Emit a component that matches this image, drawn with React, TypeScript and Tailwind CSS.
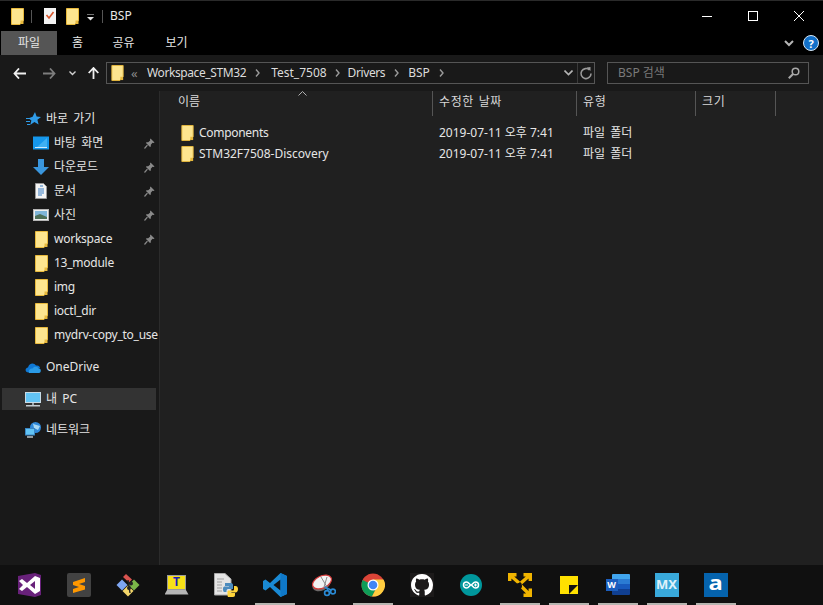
import React from 'react';

const FONT = "font-['Noto_Sans','Noto_Sans_CJK_KR',sans-serif]";

function Folder({ className = 'w-[13px] h-[17px]' }: { className?: string }) {
  return (
    <svg className={className} viewBox="0 0 13 17">
      <path d="M0.5 0.5H12.5V12.5L9 16.5H0.5Z" fill="#fde58f" stroke="#e8b93c" />
      <path d="M9.5 16V12.5H12.5V16Z" fill="#e8b93c" />
    </svg>
  );
}

function Pin() {
  return (
    <svg className="w-[11px] h-[11px]" viewBox="0 0 11 11">
      <path d="M6.5 0.5L10.5 4.5L9.5 5L8.5 4.8L6.8 6.8L6.8 8.6L6 9L2 5L2.4 4.2L4.2 4.2L6.2 2.5L6 1.5Z" fill="#8a8a8a" />
      <path d="M3.4 7.2L0.5 10.5" stroke="#8a8a8a" strokeWidth="1.2" />
    </svg>
  );
}

function DesktopIcon() {
  return (
    <svg className="w-4 h-3.5" viewBox="0 0 16 14">
      <rect width="16" height="13" y="0.5" fill="#1597ec" />
      <path d="M2 11.5H14" stroke="#cdeafc" />
      <path d="M4 11L14 2V11Z" fill="#3fb0f3" />
    </svg>
  );
}

function DownloadIcon() {
  return (
    <svg className="w-4 h-4" viewBox="0 0 16 16">
      <path d="M5 0H11V8H16L8 16L0 8H5Z" fill="#3a96dd" />
    </svg>
  );
}

function DocumentIcon() {
  return (
    <svg className="w-3 h-4" viewBox="0 0 12 16">
      <path d="M0.5 0.5H8.5L11.5 3.5V15.5H0.5Z" fill="#f4f4f4" stroke="#9a9a9a" />
      <path d="M5 3H8M3 6H9M3 8H9M3 10H9M3 12H7" stroke="#3b7fc4" />
    </svg>
  );
}

function PictureIcon() {
  return (
    <svg className="w-4 h-3.5" viewBox="0 0 16 14">
      <rect x="0.5" y="1.5" width="15" height="11" fill="#eeeeee" stroke="#b5b5b5" />
      <rect x="2" y="3" width="12" height="8" fill="#7fb5d8" />
      <path d="M2 8L7 6L14 9V11H2Z" fill="#4d6f57" />
    </svg>
  );
}

function QuickStar() {
  return (
    <svg className="w-[15px] h-[14px]" viewBox="0 0 15 14">
      <path d="M9 0L10.6 4.6L15 5L11.4 7.8L12.6 12.5L8.4 10L4.2 13L5.4 8.5L2.6 6.2L6.6 4.8Z" fill="#2f9ce8" />
      <path d="M0 6.5H4M0 9.5H4M1 12.5H4" stroke="#2f9ce8" />
    </svg>
  );
}

function OneDriveIcon() {
  return (
    <svg className="w-4 h-[11px]" viewBox="0 0 16 11">
      <path d="M3.5 10.5C0 10.5 -0.5 6 3 5.5C4 1 9 0 11 3.5C14 3 15 5 15 6L8 7Z" fill="#0f78d4" />
      <path d="M4 11H14C16.5 10.5 16.5 6.5 13.5 6.2C11.5 4 8.5 4.6 7.6 6.6C5 6 3 8.5 4 11Z" fill="#2a9ae6" />
    </svg>
  );
}

function PcIcon() {
  return (
    <svg className="w-4 h-[15px]" viewBox="0 0 16 15">
      <rect x="0.5" y="0.5" width="15" height="10" fill="#62c4f5" stroke="#c8dbe6" />
      <path d="M7 11H9V13H7Z" fill="#9aa5ac" />
      <path d="M1 13H15V14.5H1Z" fill="#c4ccd1" />
    </svg>
  );
}

function NetworkIcon() {
  return (
    <svg className="w-4 h-4" viewBox="0 0 16 16">
      <circle cx="10.5" cy="5.5" r="5.5" fill="#2f89d9" />
      <path d="M8 1.5C10 3 13 3 15 4L13 8L9 6Z" fill="#a8d9f4" />
      <rect x="0.5" y="6.5" width="9" height="6.5" fill="#62c4f5" stroke="#3a86c4" />
      <path d="M2 15H8" stroke="#b9c3c9" strokeWidth="1.5" />
    </svg>
  );
}

function NavRow({
  icon,
  label,
  pinned,
  selected,
  indent,
}: {
  icon: React.ReactNode;
  label: string;
  pinned?: boolean;
  selected?: boolean;
  indent?: boolean;
}) {
  // lowercase folder names run a little narrower than the korean labels
  const tight = /^[a-z0-9]/.test(label);
  return (
    <div
      className={`flex items-center shrink-0 ${indent ? 'pl-[33px]' : 'pl-[25px]'} ${
        selected ? 'bg-[#333333] mx-[2px] w-[154px] !pl-[23px] h-[22px]' : 'h-6'
      }`}
    >
      <span className="w-4 flex justify-center shrink-0">{icon}</span>
      <span
        className={`ml-[5px] text-[12px] text-[#e6e6e6] whitespace-nowrap w-full ${
          tight ? 'tracking-[-0.25px]' : '[word-spacing:2px]'
        }`}
      >
        {label}
      </span>
      {pinned && (
        <span className="shrink-0 mr-[4px]">
          <Pin />
        </span>
      )}
    </div>
  );
}

function FileRow({ name, nameClass = '' }: { name: string; nameClass?: string }) {
  return (
    <div className="flex items-center h-[21px] text-[12px] text-[#e6e6e6]">
      <span className="w-[273px] flex items-center gap-[5px] pl-[21px] shrink-0">
        <Folder className="w-[13px] h-[16px]" />
        <span className={nameClass}>{name}</span>
      </span>
      <span className="w-[144px] pl-[6px] shrink-0">2019-07-11 오후 7:41</span>
      <span className="pl-[6px] [word-spacing:2px]">파일 폴더</span>
    </div>
  );
}

function HeaderCell({ label, width }: { label: string; width: string }) {
  return (
    <div
      className={`${width} h-[25px] shrink-0 border-r border-[#555555] pl-[6px] pt-[2px] text-[12px] text-[#d9d9d9] tracking-[0.6px] [word-spacing:1px]`}
    >
      {label}
    </div>
  );
}

function Crumb({ className = 'mx-[9px]' }: { className?: string }) {
  return (
    <svg className={`w-[5px] h-2 shrink-0 ${className}`} viewBox="0 0 5 8">
      <path d="M1 0.5L4 4L1 7.5" stroke="#9a9a9a" fill="none" strokeWidth="1.4" />
    </svg>
  );
}

/* taskbar pictures */
const taskIcons: { key: string; open?: boolean; node: React.ReactNode }[] = [
  {
    key: 'vs',
    node: (
      <svg className="w-6 h-6" viewBox="0 0 24 24">
        <path d="M0 3L17 0L23 2V22L17 24L0 21Z" fill="#68217a" />
        <path d="M1 8L4 6L9 10L17 3L22 5V18L17 21L9 14L4 18L1 16L5 12Z" fill="#fff" />
        <path d="M17 8L12 12L17 16Z" fill="#68217a" />
      </svg>
    ),
  },
  {
    key: 'sublime',
    node: (
      <span className="w-6 h-6 rounded-[2px] bg-[#424242] flex items-center justify-center">
        <svg className="w-[12px] h-[16px]" viewBox="0 0 12 16">
          <path d="M0 5L12 1V5L6 7L12 9V12.5L0 16V12L6 10L0 8Z" fill="#ff9800" />
        </svg>
      </span>
    ),
  },
  {
    key: 'gitgui',
    node: (
      <svg className="w-6 h-6" viewBox="0 0 24 24">
        <path d="M0.5 12L6 6.5L11.5 12L6 17.5Z" fill="#7ea6f2" />
        <path d="M12.5 12L18 6.5L23.5 12L18 17.5Z" fill="#7ab648" />
        <path d="M6.5 18L12 12.5L17.5 18L12 23.5Z" fill="#f4d66a" />
        <path d="M7 4L10 1L16 6.5L13 9.5Z" fill="#d9534f" />
        <circle cx="15" cy="10.5" r="2" fill="#222" />
        <circle cx="13" cy="15" r="2" fill="#222" />
        <path d="M12 7L14 20" stroke="#222" strokeWidth="1.4" />
      </svg>
    ),
  },
  {
    key: 'tera',
    node: (
      <span className="w-6 h-6 flex flex-col items-center justify-end">
        <span className="w-[19px] h-[15px] bg-[#f7e017] border border-[#9a9a9a] flex items-center justify-center text-[#1a1ab8] text-[12px] font-bold leading-none">
          T
        </span>
        <span className="w-6 h-[5px] bg-[#b5b5b5] mb-[2px] [clip-path:polygon(12%_0,88%_0,100%_100%,0_100%)]" />
      </span>
    ),
  },
  {
    key: 'python',
    node: (
      <svg className="w-6 h-6" viewBox="0 0 24 24">
        <path d="M0.5 0.5H11L17 6V22H0.5Z" fill="#e4e4e4" stroke="#a8a8a8" />
        <path d="M3 6H10M3 9H8M3 12H8M3 15H8M3 18H8" stroke="#a0a0a0" />
        <path d="M11 10H17C18.5 10 19 11 19 12V16H14C13 16 12.5 17 12.5 18V19H10.5C9 19 9 17 9 15.5C9 14 10 13.5 11 13.5H15V13H11Z" fill="#4b8bbe" />
        <path d="M14 24H19C20.5 24 21 23 21 22V20H16V19.5H21.5C23 19.5 24 18 24 16C24 14 23 13 21.5 13H20V16.5C20 17 19.5 17.5 19 17.5H14.5C14 17.5 13.5 18 13.5 18.5V22C13.5 23 14 24 14 24Z" fill="#ffd43b" />
      </svg>
    ),
  },
  {
    key: 'vscode',
    open: true,
    node: (
      <svg className="w-6 h-6" viewBox="0 0 24 24">
        <path d="M17.5 0L24 3V21L17.5 24L7 14L2.5 17.5L0 16V8L2.5 6.5L7 10ZM17.5 6.5L10.5 12L17.5 17.5Z" fill="#1a8ad4" />
        <path d="M17.5 0L24 3V21L17.5 24Z M17.5 6.5V17.5L17.5 24Z" fill="#0f78c8" fillRule="evenodd" />
      </svg>
    ),
  },
  {
    key: 'snip',
    node: (
      <svg className="w-6 h-6" viewBox="0 0 24 24">
        <ellipse cx="9.5" cy="11.5" rx="9.5" ry="6" transform="rotate(-25 9.5 11.5)" fill="#6e6a6a" />
        <ellipse cx="10" cy="9" rx="10" ry="6" transform="rotate(-25 10 9)" fill="#f2f2f2" stroke="#d83a3a" strokeWidth="1.2" />
        <path d="M9 4L15 14M15 4L12 14" stroke="#8a8a8a" />
        <path d="M14 14L16 17M12.5 14L19 17" stroke="#2a8ad4" strokeWidth="1.4" />
        <circle cx="15" cy="20" r="2.4" fill="none" stroke="#2a8ad4" strokeWidth="1.7" />
        <circle cx="21" cy="18.5" r="2.4" fill="none" stroke="#2a8ad4" strokeWidth="1.7" />
      </svg>
    ),
  },
  {
    key: 'chrome',
    open: true,
    node: (
      <svg className="w-6 h-6" viewBox="0 0 24 24">
        <circle cx="12" cy="12" r="11.5" fill="#db4437" />
        <path d="M12 12L1.6 7A11.5 11.5 0 0 0 11 23.5L17 12Z" fill="#0f9d58" />
        <path d="M12 6.5H22.5A11.5 11.5 0 0 1 11 23.5L17 12Z" fill="#ffcd40" />
        <circle cx="12" cy="12" r="5.5" fill="#fff" />
        <circle cx="12" cy="12" r="4.3" fill="#4285f4" />
      </svg>
    ),
  },
  {
    key: 'github',
    node: (
      <span className="w-6 h-6 bg-[#1c1a1a] flex items-center justify-center">
        <svg className="w-[22px] h-[22px]" viewBox="0 0 16 16">
          <path
            fill="#fff"
            d="M8 0C3.58 0 0 3.58 0 8c0 3.54 2.29 6.53 5.47 7.59.4.07.55-.17.55-.38 0-.19-.01-.82-.01-1.49-2.01.37-2.53-.49-2.69-.94-.09-.23-.48-.94-.82-1.13-.28-.15-.68-.52-.01-.53.63-.01 1.08.58 1.23.82.72 1.21 1.87.87 2.33.66.07-.52.28-.87.51-1.07-1.78-.2-3.64-.89-3.64-3.95 0-.87.31-1.59.82-2.15-.08-.2-.36-1.02.08-2.12 0 0 .67-.21 2.2.82.64-.18 1.32-.27 2-.27s1.36.09 2 .27c1.53-1.04 2.2-.82 2.2-.82.44 1.1.16 1.92.08 2.12.51.56.82 1.27.82 2.15 0 3.07-1.87 3.75-3.65 3.95.29.25.54.73.54 1.48 0 1.07-.01 1.93-.01 2.2 0 .21.15.46.55.38A8.01 8.01 0 0 0 16 8c0-4.42-3.58-8-8-8z"
          />
        </svg>
      </span>
    ),
  },
  {
    key: 'arduino',
    node: (
      <svg className="w-6 h-6" viewBox="0 0 24 24">
        <circle cx="12" cy="12" r="11" fill="#00979c" />
        <path d="M7.5 9C10 9 10.5 12 12 12C13.5 12 14 9 16.5 9A3 3 0 0 1 16.5 15C14 15 13.5 12 12 12C10.5 12 10 15 7.5 15A3 3 0 0 1 7.5 9Z" fill="none" stroke="#fff" strokeWidth="1.5" />
        <path d="M6 12H9M15 12H18M16.5 10.5V13.5" stroke="#fff" />
      </svg>
    ),
  },
  {
    key: 'arrows',
    open: true,
    node: (
      <svg className="w-6 h-6" viewBox="0 0 24 24">
        <g stroke="#f0b400" strokeWidth="3.4" fill="none">
          <path d="M1.7 8V1.7H8.5M2 2L11 10" />
          <path d="M15.5 1.7H22.3V8M22 2L13 10" />
          <path d="M22.3 15.5V22.3H15.5M22 22L12 12" />
        </g>
        <circle cx="11" cy="13" r="3" fill="#101010" />
      </svg>
    ),
  },
  {
    key: 'sticky',
    open: true,
    node: (
      <svg className="w-[18px] h-[18px]" viewBox="0 0 18 18">
        <path d="M0 0H18V18H0Z" fill="#ffe100" />
        <path d="M9 9H18L9 18Z" fill="#111" />
      </svg>
    ),
  },
  {
    key: 'word',
    open: true,
    node: (
      <span className="relative w-6 h-[21px] block">
        <span className="absolute right-0 top-0 w-[18px] h-[21px] rounded-[1px] overflow-hidden flex flex-col">
          <span className="h-[5px] bg-[#41a5ee]" />
          <span className="h-[5px] bg-[#2b7cd3]" />
          <span className="h-[5px] bg-[#185abd]" />
          <span className="h-[6px] bg-[#103f91]" />
        </span>
        <span className="absolute left-0 top-[5px] w-[12px] h-[12px] bg-[#1b5ebe] text-white text-[9px] leading-[12px] font-bold text-center">
          W
        </span>
      </span>
    ),
  },
  {
    key: 'mx',
    open: true,
    node: (
      <span className="w-6 h-6 bg-[#39a9db] flex items-center justify-center text-[#dff1fa] text-[13px] font-bold leading-none">
        MX
      </span>
    ),
  },
  {
    key: 'a',
    open: true,
    node: (
      <span className="w-6 h-6 bg-[#0563ad] flex items-center justify-center">
        <span className="text-white text-[19px] font-bold leading-none pb-[2px] scale-x-125">a</span>
      </span>
    ),
  },
];

export default function App() {
  return (
    <div className={`w-[823px] h-[605px] overflow-hidden flex flex-col bg-black ${FONT}`}>
      {/* title bar */}
      <div className="h-[31px] shrink-0 flex items-center pl-[11px] border-t border-[#2a2a2a]">
        <Folder className="w-[13px] h-[17px]" />
        <span className="w-px h-[13px] bg-[#555] ml-[7px]" />
        <svg className="w-3 h-4 ml-[12px]" viewBox="0 0 12 16">
          <path d="M0 0H12V16H0Z" fill="#f3f3f3" />
          <path d="M2.5 7L5 10L9.5 4" stroke="#d8562c" strokeWidth="1.6" fill="none" />
        </svg>
        <span className="ml-[10px]">
          <Folder className="w-[13px] h-[17px] block" />
        </span>
        <svg className="w-[7px] h-[7px] ml-[8px] mt-[3px]" viewBox="0 0 7 7">
          <path d="M0 0H7" stroke="#e5e5e5" />
          <path d="M0 3H7L3.5 6.5Z" fill="#e5e5e5" />
        </svg>
        <span className="w-px h-[13px] bg-[#555] ml-[8px]" />
        <span className="ml-[7px] text-[12px] text-[#e8e8e8]">BSP</span>
        <div className="ml-auto flex items-center pr-px">
          <span className="w-[46px] flex justify-center">
            <span className="w-[10px] h-px bg-white" />
          </span>
          <span className="w-[46px] flex justify-center">
            <span className="w-[10px] h-[10px] border border-white" />
          </span>
          <span className="w-[46px] flex justify-center">
            <svg className="w-[10px] h-[10px]" viewBox="0 0 10 10">
              <path d="M0 0L10 10M10 0L0 10" stroke="#fff" />
            </svg>
          </span>
        </div>
      </div>

      {/* ribbon tabs */}
      <div className="h-6 shrink-0 flex items-center text-[12px] text-[#e6e6e6]">
        <span className="ml-px w-[56px] h-6 bg-[#555555] flex items-center justify-center">파일</span>
        <span className="w-[41px] text-center">홈</span>
        <span className="w-[41px] text-center ml-[5px]">공유</span>
        <span className="w-[41px] text-center ml-[12px]">보기</span>
        <div className="ml-auto flex items-center gap-[9px] pr-[4px]">
          <svg className="w-[10px] h-[7px]" viewBox="0 0 10 7">
            <path d="M1 1L5 5L9 1" stroke="#b5b5b5" strokeWidth="2" fill="none" />
          </svg>
          <span className="w-4 h-4 rounded-full bg-[#1270c9] border border-[#d5e6f5] flex items-center justify-center text-white text-[11px] font-bold leading-none">
            ?
          </span>
        </div>
      </div>

      {/* address bar */}
      <div className="h-9 shrink-0 bg-[#191919] flex items-center pl-[13px] text-[12px] text-[#dcdcdc]">
        <svg className="w-[13px] h-[11px]" viewBox="0 0 13 11">
          <path d="M6 0.5L1.5 5.5L6 10.5M1.5 5.5H13" stroke="#f0f0f0" strokeWidth="1.8" fill="none" />
        </svg>
        <svg className="w-[13px] h-[11px] ml-[17px]" viewBox="0 0 13 11">
          <path d="M7 0.5L11.5 5.5L7 10.5M11.5 5.5H0" stroke="#7d7d7d" strokeWidth="1.8" fill="none" />
        </svg>
        <svg className="w-[7px] h-[5px] ml-[13px]" viewBox="0 0 7 5">
          <path d="M0.5 0.5L3.5 3.5L6.5 0.5" stroke="#d0d0d0" strokeWidth="1.4" fill="none" />
        </svg>
        <svg className="w-[11px] h-[12px] ml-[12px]" viewBox="0 0 11 12">
          <path d="M5.5 12V1.5M0.7 6L5.5 1L10.3 6" stroke="#f0f0f0" strokeWidth="1.8" fill="none" />
        </svg>
        <div className="ml-[7px] w-[489px] h-[22px] border border-[#555555] flex items-center">
          <span className="ml-[4px]">
            <Folder className="w-[13px] h-[16px] block" />
          </span>
          <span className="ml-[7px] w-[16px] text-[#8a8a8a] text-[13px] leading-none shrink-0">«</span>
          <span className="tracking-[-0.4px]">Workspace_STM32</span>
          <Crumb className="ml-[9px] mr-[11px]" />
          <span>Test_7508</span>
          <Crumb className="mx-[8px]" />
          <span className="tracking-[-0.4px]">Drivers</span>
          <Crumb />
          <span>BSP</span>
          <Crumb />
          <div className="ml-auto flex items-center h-full">
            <svg className="w-[9px] h-[6px] mr-[4px]" viewBox="0 0 9 6">
              <path d="M0.5 0.5L4.5 4.5L8.5 0.5" stroke="#b5b5b5" strokeWidth="1.6" fill="none" />
            </svg>
            <span className="w-px h-full bg-[#3a3a3a]" />
            <svg className="w-[16px] h-[13px]" viewBox="0 0 16 13">
              <path d="M11.5 3A5 5 0 1 0 13 6.5" stroke="#9a9a9a" strokeWidth="1.6" fill="none" />
              <path d="M8.5 0.5L12.5 0V4Z" fill="#9a9a9a" />
            </svg>
          </div>
        </div>
        <div className="ml-[12px] w-[202px] h-[22px] border border-[#555555] flex items-center pl-[10px] pr-[8px] text-[#7a7a7a]">
          <span>BSP 검색</span>
          <svg className="ml-auto w-[12px] h-[12px]" viewBox="0 0 12 12">
            <circle cx="7.5" cy="4.5" r="3.3" stroke="#a8a8a8" strokeWidth="1.5" fill="none" />
            <path d="M5 7L0.8 11.2" stroke="#a8a8a8" strokeWidth="2" />
          </svg>
        </div>
      </div>

      {/* body */}
      <div className="flex-1 min-h-0 flex">
        <div className="w-[160px] shrink-0 bg-[#191919] border-r border-[#2b2b2b] pt-[16px] overflow-hidden">
          <NavRow icon={<QuickStar />} label="바로 가기" />
          <NavRow indent icon={<DesktopIcon />} label="바탕 화면" pinned />
          <NavRow indent icon={<DownloadIcon />} label="다운로드" pinned />
          <NavRow indent icon={<DocumentIcon />} label="문서" pinned />
          <NavRow indent icon={<PictureIcon />} label="사진" pinned />
          <NavRow indent icon={<Folder />} label="workspace" pinned />
          <NavRow indent icon={<Folder />} label="13_module" />
          <NavRow indent icon={<Folder />} label="img" />
          <NavRow indent icon={<Folder />} label="ioctl_dir" />
          <NavRow indent icon={<Folder />} label="mydrv-copy_to_use" />
          <div className="h-2" />
          <NavRow icon={<OneDriveIcon />} label="OneDrive" />
          <div className="h-[9px]" />
          <NavRow selected icon={<PcIcon />} label="내 PC" />
          <div className="h-2" />
          <NavRow icon={<NetworkIcon />} label="네트워크" />
        </div>

        <div className="flex-1 min-w-0 bg-[#202020] relative">
          <svg className="absolute left-[138px] top-0 w-[9px] h-[5px]" viewBox="0 0 9 5">
            <path d="M0.5 4.5L4.5 0.5L8.5 4.5" stroke="#b0b0b0" fill="none" />
          </svg>
          <div className="flex">
            <div className="w-[273px] h-[25px] shrink-0 border-r border-[#555555] pl-[18px] pt-[2px] text-[12px] text-[#d9d9d9]">
              이름
            </div>
            <HeaderCell label="수정한 날짜" width="w-[144px]" />
            <HeaderCell label="유형" width="w-[119px]" />
            <HeaderCell label="크기" width="w-[80px]" />
          </div>
          <div className="pt-[6px]">
            <FileRow name="Components" nameClass="tracking-[-0.3px]" />
            <FileRow name="STM32F7508-Discovery" />
          </div>
        </div>
      </div>

      {/* taskbar */}
      <div className="h-10 shrink-0 bg-[#101010] flex pl-[5px]">
        {taskIcons.map((item) => (
          <div key={item.key} className="relative w-[49px] h-10 flex items-center justify-center pb-[1px]">
            {item.node}
            {item.open && <span className="absolute bottom-0 left-[5px] w-[40px] h-[2px] bg-[#b5b5b0]" />}
          </div>
        ))}
      </div>
    </div>
  );
}
